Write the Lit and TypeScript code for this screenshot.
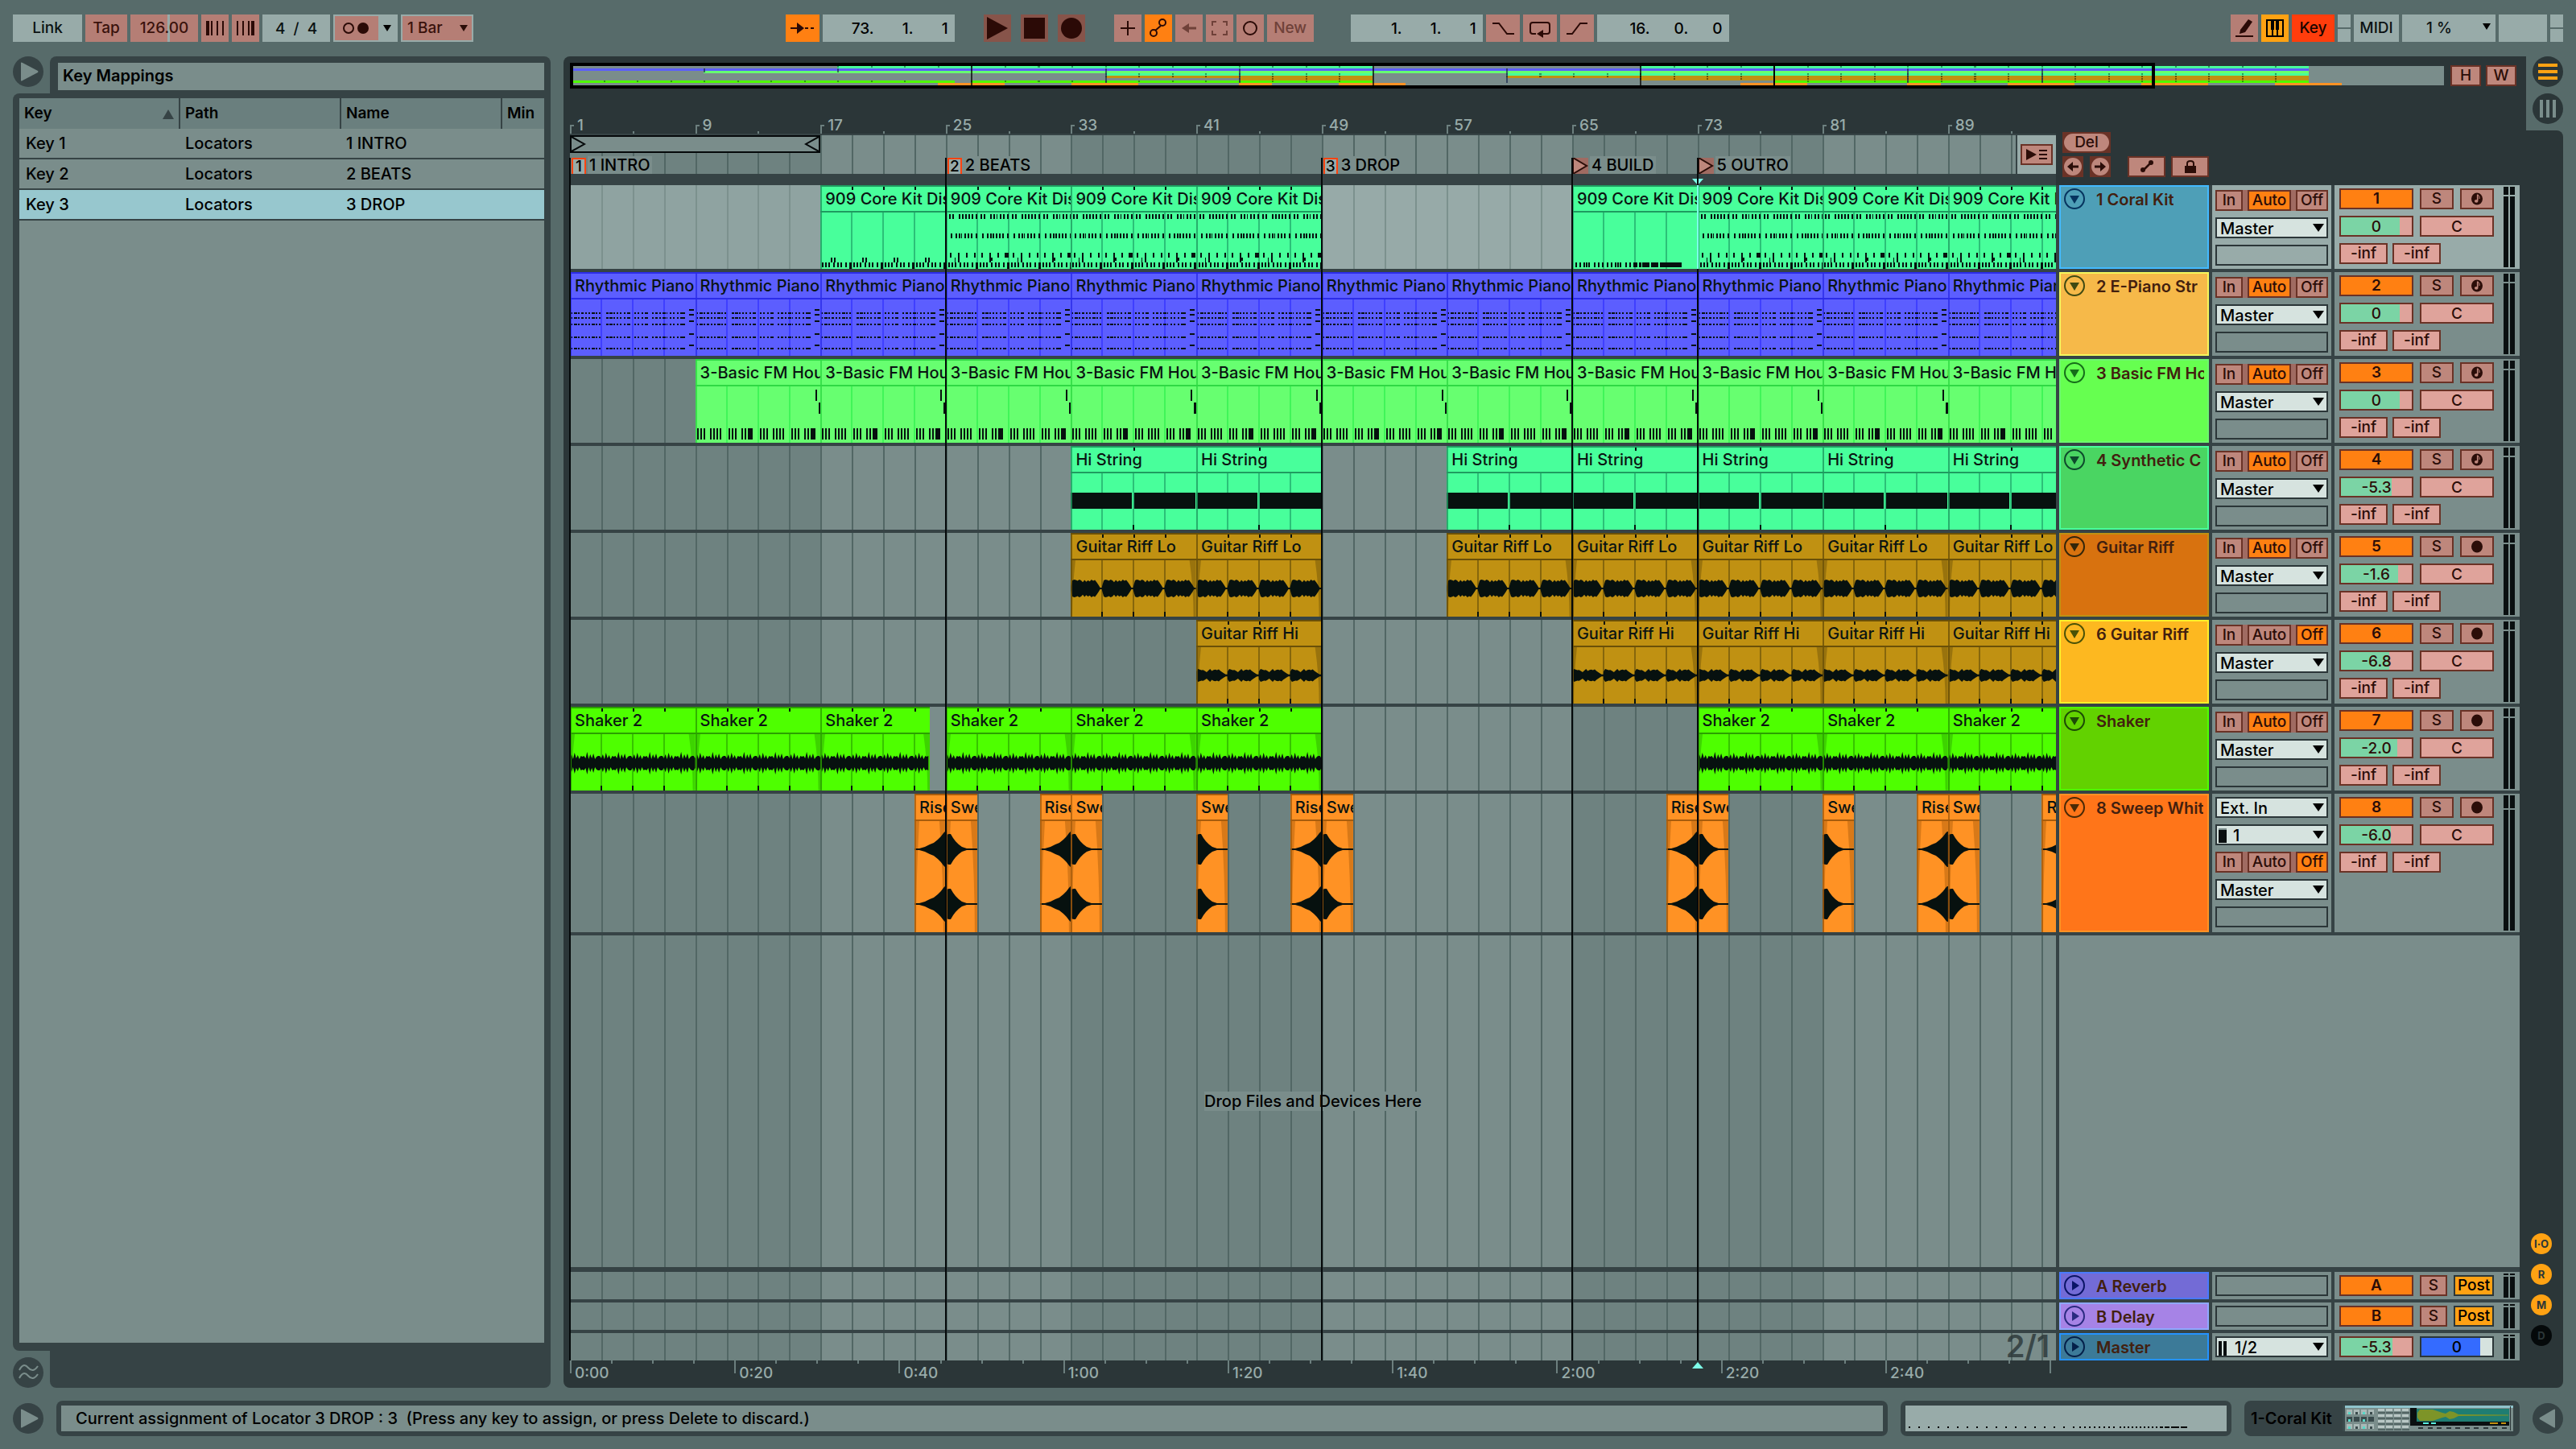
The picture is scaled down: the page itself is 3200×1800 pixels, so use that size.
import { LitElement, html, svg, css, nothing } from "lit";
import type { TemplateResult } from "lit";
import { customElement, property } from "lit/decorators.js";
import { classMap } from "lit/directives/class-map.js";
import { styleMap } from "lit/directives/style-map.js";

/* ---------- timeline geometry ---------- */
const VIEW_BARS = 94.9; // bars visible in the arrangement
const OVER_BARS = 112.1; // bars covered by the overview
const BAR = 19.5; // drawing units for one bar inside a clip
const SECONDS_PER_BAR = 1.9048;
const pct = (bar: number) => ((bar - 1) / VIEW_BARS) * 100;
const range = (n: number) => Array.from({ length: n }, (_, i) => i);

type Kind = "drums" | "chords" | "bass" | "pad" | "riffLo" | "riffHi" | "shaker" | "sweep";
interface Clip { at: number; bars: number; name: string; }
interface Track {
  kind: Kind; name: string; num: string; clip: string; edge: string; line: string;
  head: string; headEdge: string; ink: string; midi: boolean; monitor: number;
  vol: string; level: number; clips: Clip[]; peak?: number;
}

const rep = (name: string, starts: number[], bars = 8): Clip[] => starts.map((at) => ({ at, bars, name }));

const TRACKS: Track[] = [
  { kind: "drums", name: "1 Coral Kit", num: "1", clip: "#48ff9b", edge: "#1f9b60", line: "#2cc078", head: "#4e9fb7", headEdge: "#43baff", ink: "#06345f", midi: true, monitor: 1, vol: "0", level: 83,
    clips: rep("909 Core Kit Distort", [17, 25, 33, 41, 65, 73, 81, 89]) },
  { kind: "chords", name: "2 E-Piano Str", num: "2", clip: "#5c5eff", edge: "#2c2ce8", line: "#3f3fff", head: "#f6b949", headEdge: "#f4f65c", ink: "#3f4a12", midi: true, monitor: 1, vol: "0", level: 83,
    clips: rep("Rhythmic Piano", [1, 9, 17, 25, 33, 41, 49, 57, 65, 73, 81, 89]) },
  { kind: "bass", name: "3 Basic FM Ho", num: "3", clip: "#67ff70", edge: "#2fd944", line: "#40f558", head: "#66ff50", headEdge: "#6df76e", ink: "#156d1a", midi: true, monitor: 1, vol: "0", level: 83,
    clips: rep("3-Basic FM House", [9, 17, 25, 33, 41, 49, 57, 65, 73, 81, 89]) },
  { kind: "pad", name: "4 Synthetic C", num: "4", clip: "#48ff9b", edge: "#1f9b60", line: "#2cc078", head: "#4ad562", headEdge: "#48ff9b", ink: "#0d4a2c", midi: true, monitor: 1, vol: "-5.3", level: 72,
    clips: rep("Hi String", [33, 41, 57, 65, 73, 81, 89]) },
  { kind: "riffLo", name: "Guitar Riff", num: "5", clip: "#c09112", edge: "#6a5008", line: "#86660c", head: "#d8720f", headEdge: "#c09112", ink: "#33260a", midi: false, monitor: 1, vol: "-1.6", level: 81,
    clips: rep("Guitar Riff Lo", [33, 41, 57, 65, 73, 81, 89]) },
  { kind: "riffHi", name: "6 Guitar Riff", num: "6", clip: "#c09112", edge: "#6a5008", line: "#86660c", head: "#fdb820", headEdge: "#fff02a", ink: "#4a5206", midi: false, monitor: 2, vol: "-6.8", level: 68,
    clips: rep("Guitar Riff Hi", [41, 65, 73, 81, 89]) },
  { kind: "shaker", name: "Shaker", num: "7", clip: "#4eff00", edge: "#2ba000", line: "#36c400", head: "#62d200", headEdge: "#4eff00", ink: "#1c4a06", midi: false, monitor: 1, vol: "-2.0", level: 79,
    clips: [...rep("Shaker 2", [1, 9]), { at: 17, bars: 7, name: "Shaker 2" }, ...rep("Shaker 2", [25, 33, 41, 73, 81, 89])] },
  { kind: "sweep", name: "8 Sweep Whit", num: "8", clip: "#ff9224", edge: "#a85c0c", line: "#d67812", head: "#ff7519", headEdge: "#ff9224", ink: "#4a2a06", midi: false, monitor: 2, vol: "-6.0", level: 70, peak: 16,
    clips: [[23, 0], [25, 1], [31, 0], [33, 1], [41, 1], [47, 0], [49, 1], [71, 0], [73, 1], [81, 1], [87, 0], [89, 1], [95, 0]]
      .map(([at, s]) => ({ at, bars: 2, name: s ? "Sweep" : "Rise" })) },
];

const LOCATORS = [
  { at: 1, name: "1 INTRO", key: "1" },
  { at: 25, name: "2 BEATS", key: "2" },
  { at: 49, name: "3 DROP", key: "3" },
  { at: 65, name: "4 BUILD", key: "" },
  { at: 73, name: "5 OUTRO", key: "" },
];

/* ---------- clip contents ---------- */
const bars = (xs: number[], y: number, h: number, w = 2) =>
  xs.map((x) => `M${x} ${y}h${w}v${h}h${-w}z`).join("");

function drumNotes(at: number): string {
  const off = at % 16 === 9 ? 1 : 0;
  let d = "";
  for (const c of range(4)) {
    const x0 = c * 39 + off;
    const at0 = (xs: number[]) => xs.map((x) => x + x0);
    if (at === 65) {
      if (c < 2) d += bars(at0([4, 9, 14, 17, 20, 27, 32, 37]), 62, 6);
      continue;
    }
    if (at !== 17) {
      d += bars(at0([3, 7, 15, 19, 27, 31, 36]), 2, 6) + bars(at0([23]), 2, 6, c % 2 ? 1 : 2);
      d += bars(at0([5, 11, 15, 22, 26, 30, 36]), 26, 6) + bars(at0([18]), 26, 6, c % 2 ? 2 : 1);
      d += bars(at0([4, 14, 24]), 50, 6) + bars(at0(c % 2 ? [33] : [34]), 50, 6, c % 2 ? 5 : 2);
      d += bars(at0([14]), 56, 6) + (c % 2 ? bars(at0([16]), 56, 4) : bars(at0([10]), 56, 6, 1));
    } else d += bars(at0([13, 17]), 56, 6);
    d += bars(at0([2, 6, 10, 16, 21, 25, 31]), 62, 6) + bars(at0([36]), 62, 8, 3);
  }
  if (at === 65) d += bars([78, 83], 62, 6, 3) + bars([87, 98, 109, 118], 62, 6, 9) + bars([127], 62, 6, 9);
  return d;
}

function chordNotes(): string {
  let d = "";
  for (const y of [16, 22, 30, 46, 60]) {
    for (const x of range(33)) {
      if (x === 9 || x === 17 || x === 22) continue;
      const w = x % 5 === 1 ? 4 : x % 7 === 3 ? 3 : 2;
      d += `M${x * 4.4 + 1} ${y}h${w}v2h${-w}z`;
    }
  }
  for (const y of [12, 18, 26, 42, 56]) d += `M148 ${y}h6v2h-6z`;
  return d;
}

function bassNotes(): string {
  let d = "M149 4h2v14h-2zM153 20h3v14h-3z";
  for (const c of range(4)) {
    const x0 = c * 39;
    d += bars([2, 6, 10, 18, 22, 26, 30].map((x) => x + x0), 52, 14);
    if (c % 2) d += bars([x0 + 27], 52, 14, 4);
  }
  return d;
}

// Mirrors a list of half-heights around a centre line.
function envelope(points: [number, number][], cy: number): string {
  const top = points.map(([x, h]) => `${x.toFixed(1)} ${(cy - h).toFixed(1)}`);
  const bottom = [...points].reverse().map(([x, h]) => `${x.toFixed(1)} ${(cy + h).toFixed(1)}`);
  return `M${top.join("L")}L${bottom.join("L")}z`;
}

function riffWave(amp: number, cy: number): string {
  const lo = [0.2, 0.9, 1, 0.95, 0.85, 1, 0.9, 0.7, 0.95, 0.75, 0.9, 0.8, 1, 0.85, 0.95, 0.7, 0.4, 0.1, 0.1];
  const hi = [0.6, 1, 0.9, 0.8, 0.85, 0.7, 0.5, 0.75, 1, 0.7, 0.85, 0.9, 0.8, 0.95, 0.7, 0.5, 0.3, 0.15, 0.15];
  const shape = amp > 10 ? lo : hi;
  const pts: [number, number][] = [];
  for (const c of range(4)) shape.forEach((v, i) => pts.push([c * 39 + i * 2.16, v * amp]));
  return envelope(pts, cy);
}

function shakerWave(width: number): string {
  const pts: [number, number][] = [];
  // alternating valleys and peaks, one pass per two bars
  const seq = [6, 11, 5, 13, 6, 10, 5, 9, 8, 9, 6, 14, 5, 11, 6, 12, 5, 8, 9, 9];
  for (let x = 0, i = 0; x <= width; x += 1.95, i++) pts.push([x, seq[i % seq.length]]);
  return envelope(pts, 36);
}

function sweepWave(rise: boolean): string {
  const up: [number, number][] = [[0, 1], [6, 1], [13, 3], [19, 6], [24, 8], [29, 12], [33, 16], [36, 20], [38, 22], [39, 22]];
  const down: [number, number][] = [[0, 18], [4, 19], [6, 19], [9, 14], [12, 10], [16, 6], [20, 3], [26, 1], [39, 1]];
  return [35, 103].map((cy) => envelope(rise ? up : down, cy)).join("");
}

function clipBody(t: Track, c: Clip): TemplateResult {
  const w = c.bars * BAR;
  const h = t.kind === "sweep" ? 138 : 70;
  const step = 2 * BAR;
  const lines = range(Math.ceil(w / step)).slice(1).map((i) => `M${i * step - 1} 0h2v${h}h-2z`).join("");
  let d = "";
  if (t.kind === "drums") d = drumNotes(c.at);
  if (t.kind === "chords") d = chordNotes();
  if (t.kind === "bass") d = bassNotes();
  if (t.kind === "pad") d = "M0 24h76v20h-76zM79 24h76v20h-76z";
  if (t.kind === "riffLo") d = riffWave(11, 35);
  if (t.kind === "riffHi") d = riffWave(8, 35);
  if (t.kind === "shaker") d = shakerWave(w);
  if (t.kind === "sweep") d = sweepWave(c.name === "Rise");
  const ticks = t.kind === "pad" ? `M${w / 2 - 1} ${h - 6}h2v6h-2z`
    : t.kind === "riffLo" || t.kind === "riffHi" || t.kind === "shaker"
      ? range(Math.ceil(w / step)).slice(1).map((i) => `M${i * step - 1} ${h - 6}h2v6h-2z`).join("") : "";
  const fades = !t.midi
    ? svg`<path d="M0 0H6Q2 ${h / 2} 2 ${h}H0zM${w} 0H${w - 8}Q${w - 3} ${h / 2} ${w - 3} ${h}H${w}z" fill=${t.edge} opacity=".45"/>` : nothing;
  return html`<svg class="body" viewBox="0 0 ${w} ${h}" preserveAspectRatio="none" aria-hidden="true">
    ${fades}
    <path d=${lines} fill=${t.line} shape-rendering="crispEdges" />
    <path d=${d} fill="#07110f" shape-rendering=${t.midi ? "crispEdges" : "auto"} />
    <path d=${ticks} fill="#07110f" shape-rendering="crispEdges" />
  </svg>`;
}

/* ---------- shared look ---------- */
const base = css`
  :host { display: block; box-sizing: border-box; }
  *, *::before, *::after { box-sizing: border-box; }
  button, input, select {
    font: inherit; color: inherit; margin: 0; padding: 0; border: 0; border-radius: 0;
    background: none; appearance: none; outline: none; min-width: 0;
  }
  button { display: flex; align-items: center; justify-content: center; cursor: pointer; white-space: nowrap; }
  input { text-align: center; }
  svg { display: block; }
  .btn, .val {
    height: 26px; border: 2px solid #6a3226; background: #be877c; color: #2b0d08;
    display: flex; align-items: center; justify-content: center;
  }
  .val { background: #dfa39b; width: 100%; }
  .on { background: #ff8012; }
  .pick { position: relative; display: block; height: 26px; border: 2px solid #2b3638; background: #d6e3df; }
  .pick select { width: 100%; height: 100%; padding: 0 24px 0 4px; color: #000; display: block; font-size: 20px; }
  .pick::after {
    content: ""; position: absolute; right: 3px; top: 6px; pointer-events: none;
    border: 7px solid transparent; border-top: 10px solid #000; border-bottom: 0;
  }
`;

@customElement("timeline-lane")
export class TimelineLane extends LitElement {
  @property({ attribute: false }) track?: Track;
  @property({ type: Boolean, reflect: true }) selected = false;

  static styles = [base, css`
    :host { position: relative; overflow: hidden; background: #7a8d8b; min-width: 0; }
    .grid { position: absolute; inset: 0; width: 100%; height: 100%; }
    .wash { position: absolute; inset: 0; background: #d7e8e6; opacity: .32; }
    .clip { position: absolute; top: 0; bottom: 0; display: flex; flex-direction: column; overflow: hidden; }
    .name {
      flex: none; height: 34px; position: relative; padding: 0 0 0 6px; line-height: 30px; font-size: 20px;
      border-top: 2px solid; border-bottom: 2px solid; border-color: inherit; white-space: nowrap; overflow: hidden;
      color: #0a1412;
    }
    .tick { position: absolute; top: 0; width: 2px; height: 4px; background: #07110f; }
    .seam { position: absolute; left: 0; top: 0; bottom: 0; width: 2px; opacity: .8; }
    .body { flex: 1; width: 100%; min-height: 0; }
  `];

  render() {
    const t = this.track;
    return html`
      <svg class="grid" aria-hidden="true" shape-rendering="crispEdges">
        ${[1, 33, 65].map((b) => svg`<rect x="${pct(b)}%" width="${pct(17)}%" height="100%" fill="#6e8280"/>`)}
        ${range(47).map((i) => svg`<rect x="${pct(3 + i * 2)}%" width="2" height="100%" fill="#526765"/>`)}
      </svg>
      ${this.selected ? html`<div class="wash"></div>` : nothing}
      ${t?.clips.map((c) => {
        const step = t.kind === "pad" ? 4 : 2;
        const ticks = t.kind === "chords" || t.kind === "bass" || t.kind === "sweep" || c.at === 65 && t.kind === "drums"
          ? [] : range(Math.ceil(c.bars / step)).slice(1);
        return html`<div class="clip" style=${styleMap({ left: `${pct(c.at)}%`, width: `${(c.bars / VIEW_BARS) * 100}%`, background: t.clip, borderColor: t.edge })}>
          <div class="name">${c.name}${ticks.map((i) => html`<i class="tick" style=${styleMap({ left: `${(i * step * 100) / c.bars}%` })}></i>`)}</div>
          ${clipBody(t, c)}
          <div class="seam" style=${styleMap({ background: t.edge })}></div>
        </div>`;
      })}`;
  }
}

@customElement("level-meter")
export class LevelMeter extends LitElement {
  @property({ type: Number }) head = 10;
  static styles = [base, css`
    :host { display: flex; gap: 2px; }
    .ch { width: 6px; display: flex; flex-direction: column; gap: 2px; }
    .top, .bar { background: #0a0f10; }
    .top { flex: none; }
    .bar { flex: 1; }
  `];
  render() {
    return [0, 1].map(() => html`<div class="ch"><div class="top" style=${styleMap({ height: `${this.head}px` })}></div><div class="bar"></div></div>`);
  }
}

@customElement("track-head")
export class TrackHead extends LitElement {
  @property() name = "";
  @property() fill = "";
  @property() edge = "";
  @property() ink = "";
  @property({ type: Boolean }) folded = false;
  static styles = [base, css`
    .head { height: 100%; border: 2px solid; padding: 2px 4px; display: flex; gap: 14px; overflow: hidden; }
    .name { color: #42200f; font-size: 20px; font-weight: 600; line-height: 28px; white-space: nowrap; overflow: hidden; }
    .fold { width: 26px; height: 26px; flex: none; }
  `];
  render() {
    return html`<div class="head" style=${styleMap({ background: this.fill, borderColor: this.edge })}>
      <button class="fold" aria-label="Fold ${this.name}">
        <svg width="26" height="26" viewBox="0 0 26 26"><circle cx="13" cy="13" r="12" fill="none" stroke=${this.ink} stroke-width="2"/>
          <path d=${this.folded ? "M10 7L19 13L10 19z" : "M7 9H19L13 19z"} fill=${this.ink}/></svg>
      </button>
      <span class="name">${this.name}</span>
    </div>`;
  }
}

@customElement("track-io")
export class TrackIo extends LitElement {
  @property({ attribute: false }) track!: Track;
  static styles = [base, css`
    :host { padding: 6px 4px 0; display: flex; flex-direction: column; gap: 8px; }
    :host([audio-in]) { padding-top: 4px; }
    .monitor { display: flex; justify-content: space-between; background: #a06b62; height: 26px; }
    .in { width: 34px; } .auto { width: 54px; } .off { width: 40px; }
    .slot { height: 26px; border: 2px solid #2b3638; }
    .chan { position: relative; }
    .chan select { padding-left: 20px; }
    .chan::before { content: ""; position: absolute; left: 2px; top: 3px; width: 10px; height: 18px; background: #0a0f10; border-top: 2px solid #7a8d8b; }
  `];
  render() {
    const t = this.track;
    const names = ["In", "Auto", "Off"];
    return html`
      ${t.kind === "sweep" ? html`
        <label class="pick"><select aria-label="Input type"><option>Ext. In</option></select></label>
        <label class="pick chan"><select aria-label="Input channel"><option>1</option></select></label>` : nothing}
      <div class="monitor">${names.map((n, i) => html`<button class=${classMap({ btn: true, [n.toLowerCase()]: true, on: i === t.monitor })}>${n}</button>`)}</div>
      <label class="pick"><select aria-label="Output"><option>Master</option></select></label>
      <div class="slot"></div>`;
  }
}

@customElement("track-mixer")
export class TrackMixer extends LitElement {
  @property({ attribute: false }) track!: Track;
  static styles = [base, css`
    :host { display: flex; justify-content: space-between; padding: 2px 6px; }
    .strip { padding-top: 2px; display: flex; flex-direction: column; gap: 8px; }
    .row { display: flex; gap: 8px; }
    .row.tight { gap: 6px; }
    .num { width: 92px; font-weight: 600; }
    .half { width: 42px; }
    .wide { width: 92px; }
    .send { width: 60px; background: #dfa39b; }
  `];
  render() {
    const t = this.track;
    const fill = `linear-gradient(90deg, #7bd4a5 ${t.level}%, #dfa39b ${t.level}%)`;
    return html`<div class="strip">
        <div class="row"><button class="btn on num">${t.num}</button><button class="btn half">S</button>
          <button class="btn half" aria-label="Arm">
            <svg width="14" height="16" viewBox="0 0 14 16"><ellipse cx="7" cy="8" rx="7" ry="7.5" fill="#2b0d08"/>
            ${t.midi ? svg`<path d="M7.7 2.5V10" stroke="#be877c" stroke-width="1.6"/><ellipse cx="6.2" cy="10.8" rx="2.3" ry="1.9" fill="#be877c"/><path d="M8 3Q11 5 10 8" stroke="#be877c" stroke-width="1" fill="none"/>` : nothing}</svg></button></div>
        <div class="row"><input class="val wide" aria-label="Volume" .value=${t.vol} style=${styleMap({ background: fill })}><input class="val wide" aria-label="Pan" value="C"></div>
        <div class="row tight"><button class="btn send">-inf</button><button class="btn send">-inf</button></div>
      </div>
      <level-meter .head=${t.peak ?? 10}></level-meter>`;
  }
}

@customElement("song-overview")
export class SongOverview extends LitElement {
  static styles = [base, css`
    :host { position: relative; height: 32px; padding: 4px 0; }
    .map { width: 100%; height: 24px; background: #7a8d8b; }
    .frame { position: absolute; left: 0; top: 0; bottom: 0; width: 84.6%; border: 4px solid #000; }
  `];
  render() {
    const rows: [number, number][][] = [
      [[17, 49], [65, 105]], [[1, 105]], [[9, 105]], [[33, 49], [57, 105]], [[33, 49], [57, 105]],
      [[41, 49], [65, 105]], [[1, 24], [25, 49], [73, 105]],
      [[23, 27], [31, 35], [41, 43], [47, 51], [71, 75], [81, 83], [87, 91], [95, 99], [103, 107]],
    ];
    const X = (b: number) => (b - 1) * 10;
    return html`<svg class="map" viewBox="0 0 ${OVER_BARS * 10} 24" preserveAspectRatio="none" shape-rendering="crispEdges" role="img" aria-label="Song overview">
        ${rows.map((r, i) => r.map(([a, b]) => svg`<rect x=${X(a)} y=${i * 3} width=${(b - a) * 10} height="3" fill=${TRACKS[i].clip}/>`))}
        ${rows.map((r, i) => i === 1 || i === 2 || i === 7 ? nothing : r.map(([a, b]) => range(Math.floor((b - a) / 2)).map((k) => svg`<rect x=${X(a + k * 2)} y=${i * 3} width="1" height="2" fill=${TRACKS[i].edge}/>`)))}
        ${[9, 17, 33, 41, 57, 81, 89].map((b) => svg`<rect x=${X(b)} y="3" width="1" height=${b > 30 ? 18 : 5} fill="#1c2b50" opacity=".7"/>`)}
        ${[25, 49, 65, 73].map((b) => svg`<rect x=${X(b)} width="1" height="24" fill="#000" opacity=${b === 73 ? 1 : 0.7}/>`)}
      </svg><div class="frame"></div>`;
  }
}

@customElement("app-root")
export class AppRoot extends LitElement {
  static styles = [base, css`
    :host {
      font-family: Inter, "Noto Sans", sans-serif; font-size: 19px; font-weight: 500; line-height: 24px; color: #000;
      background: #576b6a; min-height: 100vh; display: flex; flex-direction: column;
    }
    /* control bar */
    .bar { display: flex; padding: 18px 16px; color: #0b1212; }
    .group { display: flex; gap: 4px; height: 34px; }
    .group > * { height: 34px; flex: none; }
    .grow-a { flex: 388 1 0; } .grow-b { flex: 624 1 0; } .gap { width: 36px; } .gap-l { width: 46px; }
    .lt { background: #98aba9; }
    .pk { background: #b57e75; color: #3a120c; }
    .or { background: #ff8012; }
    .am { background: #ffa213; }
    .dk { background: #87544a; }
    .w34 { width: 34px; } .w42 { width: 42px; } .w84 { width: 84px; } .w164 { width: 164px; }
    .link { width: 86px; } .tap { width: 52px; } .new { width: 58px; color: #6f4139; }
    .time { text-align: right; padding-right: 8px; white-space: pre; color: #000; }
    .tempo { width: 84px; display: flex; position: relative; }
    .tempo input { width: 100%; }
    .tempo::after { content: ""; position: absolute; left: 46px; top: 0; width: 3px; height: 100%; background: #98aba9; z-index: 0; }
    .tempo input { position: relative; z-index: 1; }
    .metro { width: 80px; display: flex; border: 2px solid #98aba9; background: #98aba9; }
    .metro button { width: 54px; }
    .caret { flex: 1; display: flex; align-items: center; justify-content: center; }
    .quant { width: 90px; border: 2px solid #98aba9; position: relative; }
    .quant select { width: 100%; height: 100%; padding-left: 6px; display: block; }
    .quant::after, .cpu::after { content: ""; position: absolute; right: 5px; top: 11px; border: 5px solid transparent; border-top: 8px solid #2b0d08; border-bottom: 0; pointer-events: none; }
    .transport { gap: 12px; }
    .key { width: 53px; background: #ff3d0c; color: #1a0500; }
    .midi { width: 56px; }
    .cpu { width: 116px; position: relative; }
    .cpu select { width: 100%; height: 100%; padding-left: 30px; display: block; }
    .cpu::after { right: 6px; border-top-color: #000; }
    .w60 { width: 60px; }
    .leds { width: 16px; display: flex; flex-direction: column; gap: 2px; }
    .leds i { flex: 1; background: #98aba9; }

    /* middle */
    .mid { flex: 1; display: flex; padding: 0 16px; gap: 16px; }
    .browser { width: 668px; flex: none; display: grid; grid-template: 46px 1fr 46px / 46px 1fr; }
    .round { width: 38px; height: 38px; flex: none; border-radius: 50%; background: #364345; }
    .tab { background: #364345; border-radius: 8px 8px 0 0; padding: 8px 8px 4px 10px; }
    .title { background: #7a8d8b; height: 34px; margin: 0; padding-left: 6px; font-size: 20px; font-weight: 600; line-height: 32px; color: #000; }
    .listing { grid-column: 1 / 3; background: #364345; border-radius: 8px 0 0 8px; padding: 6px 8px 10px; display: flex; flex-direction: column; }
    .foot { align-self: end; }
    .tray { background: #364345; border-radius: 0 0 8px 8px; }
    table { border-collapse: separate; border-spacing: 0; table-layout: fixed; width: 100%; font-size: 20px; }
    th, td { text-align: left; padding: 0 0 0 6px; white-space: nowrap; }
    th { background: #6a7f7e; height: 38px; font-weight: 600; border-left: 2px solid #364345; font-size: 19px; }
    th:first-child { border-left: 0; }
    .sort { float: right; margin: 7px 6px 0 0; border: 7px solid transparent; border-bottom: 12px solid #364345; border-top: 0; }
    td { background: #7a8d8b; height: 38px; border-bottom: 2px solid #364345; padding-left: 8px; line-height: 34px; }
    tr.cur td { background: #97c7ce; }
    .c1 { width: 198px; } .c2 { width: 200px; } .c4 { width: 54px; }
    .void { flex: 1; background: #7a8d8b; }

    .arr { flex: 1; min-width: 0; display: flex; }
    .main { flex: 1; min-width: 0; background: #2b3638; border-radius: 8px 0 0 8px; padding: 8px 8px 0; display: flex; flex-direction: column; }
    .side { width: 46px; flex: none; display: flex; flex-direction: column; }
    .modes { height: 92px; padding-left: 8px; display: flex; flex-direction: column; gap: 8px; }
    .modes .round { background: #2b3638; }
    .shows { flex: 1; background: #2b3638; border-radius: 0 8px 8px 0; padding: 0 0 52px 6px; display: flex; flex-direction: column; justify-content: flex-end; gap: 12px; }
    .dot { width: 26px; height: 26px; border-radius: 50%; background: #ffa213; color: #2b3638; font-size: 13px; font-weight: 700; line-height: 26px; }
    .dot.dim { background: #05090a; }

    .over { display: flex; align-items: center; }
    song-overview { flex: 1; }
    .hw { width: 38px; }
    .hw.first { margin: 0 6px 0 8px; } .hw.last { margin-right: 4px; }

    .top { display: flex; height: 120px; }
    .rulers { flex: 1; min-width: 0; display: flex; flex-direction: column; }
    .beats { position: relative; height: 58px; border-bottom: 2px solid #364345; color: #98aba9; }
    .mark { position: absolute; bottom: 0; height: 11px; border-left: 2px solid #6c7f7e; }
    .mark::before { content: ""; position: absolute; left: 0; top: 0; width: 3px; height: 2px; background: #6c7f7e; }
    .mark.minor { height: 3px; }
    .mark.minor::before { display: none; }
    .mark span { position: absolute; left: 7px; bottom: -2px; }
    .scrub { position: relative; height: 48px; }
    .scrub timeline-lane { height: 48px; }
    .loop { position: absolute; left: 0; top: 0; height: 22px; border: 2px solid #05090a; background: #7a8d8b; display: flex; justify-content: space-between; }
    .loc { position: absolute; top: 26px; height: 22px; display: flex; align-items: flex-end; gap: 2px; font-size: 20px; }
    .loc .kb { width: 18px; height: 20px; margin-left: 2px; border: 2px solid #ff4310; border-bottom: 0; background: #98aba9; line-height: 18px; font-size: 19px; }
    .loc .nm { background: #7a8d8b; height: 22px; line-height: 22px; padding: 0 2px; white-space: nowrap; }
    .resume { position: absolute; right: 0; top: 0; width: 50px; height: 48px; background: #98aba9; border-left: 2px solid #364345; display: flex; align-items: center; justify-content: center; }
    .resume .btn { width: 40px; }
    .strip { position: relative; height: 14px; background: #364345; }
    .head-mark { position: absolute; width: 14px; height: 8px; transform: translateX(-50%); }
    .strip .head-mark { bottom: 0; }
    .tools { width: 576px; flex: none; padding: 0 0 10px 8px; display: flex; flex-direction: column; justify-content: flex-end; gap: 4px; }
    .tools .line { display: flex; }
    .pill { width: 60px; height: 26px; background: #6a3226; }
    .pill span { background: #be877c; border-radius: 12px; width: 56px; height: 22px; line-height: 22px; color: #2b0d08; }
    .nav { width: 26px; height: 26px; background: #6a3226; margin-right: 8px; }
    .tool { width: 47px; } .tool.a { margin: 0 7px 0 13px; }

    .tracks { position: relative; flex: 1; display: flex; flex-direction: column; gap: 4px; background: #364345; }
    .trk { display: grid; grid-template-columns: minmax(0, 1fr) 186px 148px 230px; grid-template-rows: minmax(0, 1fr); column-gap: 4px; height: 104px; flex: none; }
    .trk.tall { height: 172px; }
    .trk.ret { height: 34px; }
    .trk.rest { flex: 1; height: auto; min-height: 200px; margin-bottom: 2px; grid-template-columns: minmax(0, 1fr) 572px; }
    .cell { background: #7a8d8b; }
    .sel .cell { background: #98aba9; }
    .drop { position: relative; display: flex; }
    .drop timeline-lane { flex: 1; }
    .hint { position: absolute; inset: 0; margin: 0; display: flex; align-items: center; justify-content: center; font-size: 20px; }
    .hint span { background: #7a8d8b; }
    .slotbox { padding: 4px; }
    .slot { height: 26px; border: 2px solid #2b3638; }
    .retmix { display: flex; justify-content: space-between; padding: 2px 6px; }
    .retmix .row { display: flex; gap: 8px; padding-top: 2px; }
    .w92 { width: 92px; }
    .ltr { width: 92px; font-weight: 600; } .solo { width: 34px; }
    .post { width: 50px; background: #ffa213; border-color: #2b3638; color: #000; }
    .cue { border-color: #2b3638; color: #000; background: linear-gradient(90deg, #346bff 83%, #d6e3df 83%); }
    .mvol { background: linear-gradient(90deg, #7bd4a5 73%, #dfa39b 73%); }
    .stereo { position: relative; }
    .stereo select { padding-left: 22px; }
    .stereo::before { content: ""; position: absolute; left: 2px; top: 4px; width: 10px; height: 18px; border: solid #0a0f10; border-width: 0 4px; }
    .lines { position: absolute; left: 0; right: 576px; top: -34px; bottom: 0; pointer-events: none; }
    .lines i { position: absolute; top: 0; bottom: 0; width: 2px; margin-left: -1px; background: #05090a; }
    .lines .cyan { top: 34px; bottom: auto; height: 104px; background: #7dffe9; }
    .zoomtxt { position: absolute; right: 8px; bottom: 0; font-size: 38px; line-height: 36px; font-weight: 600; color: #2b3638; opacity: .8; }

    .secs { position: relative; height: 34px; margin-right: 576px; color: #98aba9; }
    .sec { position: absolute; top: 0; height: 16px; border-left: 2px solid #6c7f7e; }
    .sec.minor { height: 4px; }
    .sec span { position: absolute; left: 4px; top: 4px; }
    .secs .head-mark { top: 2px; }

    /* status bar */
    .status { display: flex; padding: 16px; height: 76px; gap: 16px; align-items: center; }
    .box { height: 44px; background: #364345; border-radius: 8px; padding: 6px; min-width: 0; }
    .msg { flex: 1; }
    .msg div { background: #7a8d8b; height: 32px; line-height: 32px; padding-left: 18px; white-space: pre; overflow: hidden; font-size: 20px; }
    .mini { width: 411px; }
    .mini svg { background: #98aba9; }
    .dev { width: 342px; display: flex; justify-content: space-between; padding: 6px 8px; line-height: 32px; font-weight: 600; font-size: 20px; }
    .dev span { flex: 1; white-space: nowrap; }
  `];

  private play = (flip = false) => html`<svg width="38" height="38" viewBox="0 0 38 38"><path d=${flip ? "M28 8V30Q28 31 26 30L9 20Q8 19 9 18L26 8Q28 7 28 8z" : "M10 8V30Q10 31 12 30L31 20Q32 19 31 18L12 8Q10 7 10 8z"} fill="#7a8d8b"/></svg>`;

  private bar() {
    const ink = "#2b0a06";
    const icon = (d: TemplateResult | TemplateResult[] | any, w = 34) => html`<svg width=${w} height="34" viewBox="0 0 ${w} 34" fill="none" stroke=${ink} stroke-width="2">${d}</svg>`;
    return html`<header class="bar">
      <div class="group">
        <button class="lt link">Link</button><button class="pk tap">Tap</button>
        <div class="tempo pk"><input aria-label="Tempo" value="126.00"></div>
        <button class="pk w34" aria-label="Nudge down">${icon(svg`<path d="M8 8V26M13 8V26M20 8V26M27 8V26" shape-rendering="crispEdges"/><path d="M8 8V26" stroke-width="4"/>`)}</button>
        <button class="pk w34" aria-label="Nudge up">${icon(svg`<path d="M7 8V26M14 8V26M21 8V26" shape-rendering="crispEdges"/><path d="M26 8V26" stroke-width="4"/>`)}</button>
        <input class="lt w84" aria-label="Time signature" value="4  /  4">
        <div class="metro"><button class="pk" aria-label="Metronome"><svg width="54" height="30" viewBox="0 0 54 30"><circle cx="17" cy="15" r="6" fill="none" stroke=${ink} stroke-width="2"/><circle cx="35" cy="15" r="7" fill=${ink}/></svg></button>
          <span class="caret"><svg width="10" height="8"><path d="M0 0H10L5 8z"/></svg></span></div>
        <label class="quant pk"><select aria-label="Quantization"><option>1 Bar</option></select></label>
      </div>
      <div class="grow-a"></div>
      <div class="group">
        <button class="or w42" aria-label="Follow">${icon(svg`<path d="M6 17H14M24 17H28M31 17H35"/><path d="M14 10L23 17L14 24z" fill=${ink} stroke="none"/>`, 42)}</button>
        <input class="lt w164 time" aria-label="Position" value="73.       1.       1">
      </div>
      <div class="gap"></div>
      <div class="group transport">
        <button class="dk w34" aria-label="Play">${icon(svg`<path d="M4 3L30 17L4 31z" fill=${ink} stroke="none"/>`)}</button>
        <button class="dk w34" aria-label="Stop">${icon(svg`<path d="M4 4H30V30H4z" fill=${ink} stroke="none"/>`)}</button>
        <button class="dk w34" aria-label="Record">${icon(svg`<circle cx="17" cy="17" r="13" fill=${ink} stroke="none"/>`)}</button>
      </div>
      <div class="gap"></div>
      <div class="group">
        <button class="pk w34" aria-label="Overdub">${icon(svg`<path d="M17 8V26M8 17H26"/>`)}</button>
        <button class="or w34" aria-label="Automation arm">${icon(svg`<circle cx="11" cy="23" r="4"/><circle cx="22" cy="10" r="4"/><path d="M13 20L20 14"/>`)}</button>
        <button class="pk w34" aria-label="Re-enable automation"><svg width="34" height="34" viewBox="0 0 34 34"><path d="M8 17L17 11V23z" fill="#6f4139"/><path d="M16 17H26" stroke="#6f4139" stroke-width="3"/></svg></button>
        <button class="pk w34" aria-label="Capture"><svg width="34" height="34" viewBox="0 0 34 34"><path d="M8 14V9H13M21 9H26V14M26 20V25H21M13 25H8V20" stroke="#6f4139" stroke-width="2" fill="none"/></svg></button>
        <button class="pk w34" aria-label="Session record">${icon(svg`<circle cx="17" cy="17" r="8"/>`)}</button>
        <button class="pk new">New</button>
      </div>
      <div class="gap-l"></div>
      <div class="group">
        <input class="lt w164 time" aria-label="Loop start" value="1.       1.       1">
        <button class="pk w42" aria-label="Punch in">${icon(svg`<path d="M8 11H16L26 24H35"/>`, 42)}</button>
        <button class="pk w42" aria-label="Loop">${icon(svg`<path d="M16 24H12Q9 24 9 21V13Q9 10 12 10H30Q33 10 33 13V21Q33 24 30 24H24"/><path d="M17 24L25 19V29z" fill=${ink} stroke="none"/>`, 42)}</button>
        <button class="pk w42" aria-label="Punch out">${icon(svg`<path d="M8 24H15L25 11H34"/>`, 42)}</button>
        <input class="lt w164 time" aria-label="Loop length" value="16.      0.      0">
      </div>
      <div class="grow-b"></div>
      <div class="group">
        <button class="pk w34" aria-label="Draw mode">${icon(svg`<path d="M6 27H28"/><path d="M22 6L27 9L18 22L11 24L12 19z" fill=${ink} stroke="none"/>`)}</button>
        <button class="am w34" aria-label="Computer keyboard"><svg width="34" height="34" viewBox="0 0 34 34" fill="none" stroke="#000" stroke-width="2"><path d="M7 7H27V27H7zM14 7V27M20 7V27"/><path d="M14 7V19M20 7V19" stroke-width="4"/></svg></button>
        <button class="key">Key</button>
        <span class="leds"><i></i><i></i></span>
        <button class="lt midi">MIDI</button>
        <label class="lt cpu"><select aria-label="CPU load"><option>1 %</option></select></label>
        <span class="lt w60"></span>
        <span class="leds"><i></i><i></i></span>
      </div>
    </header>`;
  }

  private browser() {
    const rows = [["Key 1", "1 INTRO"], ["Key 2", "2 BEATS"], ["Key 3", "3 DROP"]];
    return html`<aside class="browser">
      <button class="round" aria-label="Hide browser">${this.play()}</button>
      <div class="tab"><h2 class="title">Key Mappings</h2></div>
      <div class="listing">
        <table>
          <colgroup><col class="c1"><col class="c2"><col><col class="c4"></colgroup>
          <thead><tr><th>Key<i class="sort"></i></th><th>Path</th><th>Name</th><th>Min</th></tr></thead>
          <tbody>${rows.map(([k, n], i) => html`<tr class=${classMap({ cur: i === 2 })}><td>${k}</td><td>Locators</td><td>${n}</td><td></td></tr>`)}</tbody>
        </table>
        <div class="void"></div>
      </div>
      <button class="round foot" aria-label="Groove pool"><svg width="38" height="38" viewBox="0 0 38 38" fill="none" stroke="#7a8d8b" stroke-width="2"><path d="M8 16Q13 6 19 13T31 11M8 26Q13 16 19 23T31 21"/></svg></button>
      <div class="tray"></div>
    </aside>`;
  }

  private head() {
    return html`<div class="top">
      <div class="rulers">
        <div class="beats">
          ${range(24).map((i) => {
            const b = 1 + i * 4;
            return html`<div class=${classMap({ mark: true, minor: i % 2 === 1 })} style=${styleMap({ left: `${pct(b)}%` })}>${i % 2 ? nothing : html`<span>${b}</span>`}</div>`;
          })}
        </div>
        <div class="scrub">
          <timeline-lane></timeline-lane>
          <div class="loop" style=${styleMap({ width: `${pct(17)}%` })}>
            <svg width="18" height="18" fill="none" stroke="#05090a" stroke-width="2"><path d="M0 0L16 9L0 18"/></svg>
            <svg width="18" height="18" fill="none" stroke="#05090a" stroke-width="2"><path d="M18 0L2 9L18 18"/></svg>
          </div>
          ${LOCATORS.map((l) => html`<div class="loc" style=${styleMap({ left: `${pct(l.at)}%` })}>
            ${l.key ? html`<button class="kb">${l.key}</button>` : html`<svg width="20" height="20" viewBox="0 0 20 20"><path d="M1 0H20V20H1z" fill="#a06b62"/><path d="M1 0L18 10L1 20z" fill="#be877c" stroke="#2b0d08" stroke-width="2"/></svg>`}
            <span class="nm">${l.name}</span></div>`)}
          <div class="resume"><button class="btn" aria-label="Set locator"><svg width="28" height="18" viewBox="0 0 28 18" fill="#2b0d08"><path d="M1 2L14 9L1 16z"/><path d="M17 3H27V5H17zM17 8H27V10H17zM17 13H27V15H17z"/></svg></button></div>
        </div>
        <div class="strip"><svg class="head-mark" style=${styleMap({ left: `${pct(73)}%` })} viewBox="0 0 14 8"><path d="M0 0H14L7 8z" fill="#7dffe9"/></svg></div>
      </div>
      <div class="tools">
        <div class="line"><button class="pill"><span>Del</span></button></div>
        <div class="line">
          <button class="nav" aria-label="Previous locator"><svg width="26" height="26" viewBox="0 0 26 26"><circle cx="13" cy="13" r="11" fill="#be877c"/><path d="M6 13L13 7V19z" fill="#2b0d08"/><path d="M12 13H20" stroke="#2b0d08" stroke-width="3"/></svg></button>
          <button class="nav" aria-label="Next locator"><svg width="26" height="26" viewBox="0 0 26 26"><circle cx="13" cy="13" r="11" fill="#be877c"/><path d="M20 13L13 7V19z" fill="#2b0d08"/><path d="M6 13H14" stroke="#2b0d08" stroke-width="3"/></svg></button>
          <button class="btn tool a" aria-label="Automation mode"><svg width="20" height="18" viewBox="0 0 20 18"><path d="M5 14L15 4" stroke="#2b0d08" stroke-width="2.5"/><circle cx="5" cy="13" r="3" fill="#2b0d08"/><circle cx="15" cy="4" r="3" fill="#2b0d08"/></svg></button>
          <button class="btn tool" aria-label="Lock envelopes"><svg width="16" height="18" viewBox="0 0 16 18"><path d="M1 8H15V17H1z" fill="#2b0d08"/><path d="M4 9V5Q4 2 8 2T12 5V9" fill="none" stroke="#2b0d08" stroke-width="2"/></svg></button>
        </div>
      </div>
    </div>`;
  }

  private returns() {
    const items = [
      { name: "A Reverb", key: "A", fill: "#736bd6", edge: "#4a7aff", ink: "#0a1466" },
      { name: "B Delay", key: "B", fill: "#a683e6", edge: "#8fa8ff", ink: "#2a2a80" },
    ];
    return html`${items.map((r) => html`<div class="trk ret">
        <timeline-lane></timeline-lane>
        <track-head name=${r.name} fill=${r.fill} edge=${r.edge} ink=${r.ink} folded></track-head>
        <div class="cell slotbox"><div class="slot"></div></div>
        <div class="cell retmix"><div class="row"><button class="btn on ltr">${r.key}</button><button class="btn solo">S</button><button class="btn post">Post</button></div><level-meter .head=${2}></level-meter></div>
      </div>`)}
      <div class="trk ret">
        <timeline-lane></timeline-lane>
        <track-head name="Master" fill="#3c7a98" edge="#2492ff" ink="#04204a" folded></track-head>
        <div class="cell slotbox"><label class="pick stereo"><select aria-label="Master output"><option>1/2</option></select></label></div>
        <div class="cell retmix"><div class="row"><input class="val w92 mvol" aria-label="Master volume" value="-5.3"><input class="val w92 cue" aria-label="Cue volume" value="0"></div><level-meter .head=${2}></level-meter></div>
      </div>`;
  }

  private arrangement() {
    const total = VIEW_BARS * SECONDS_PER_BAR;
    return html`<main class="arr">
      <div class="main">
        <div class="over"><song-overview></song-overview><button class="btn hw first">H</button><button class="btn hw last">W</button></div>
        ${this.head()}
        <div class="tracks">
          ${TRACKS.map((t, i) => html`<div class=${classMap({ trk: true, tall: i === 7, sel: i === 0 })}>
            <timeline-lane .track=${t} ?selected=${i === 0}></timeline-lane>
            <track-head name=${t.name} fill=${t.head} edge=${t.headEdge} ink=${t.ink}></track-head>
            <track-io class="cell" .track=${t} ?audio-in=${i === 7}></track-io>
            <track-mixer class="cell" .track=${t}></track-mixer>
          </div>`)}
          <div class="trk rest"><div class="drop"><timeline-lane></timeline-lane><p class="hint"><span>Drop Files and Devices Here</span></p></div><div class="cell"></div></div>
          ${this.returns()}
          <div class="lines">${LOCATORS.map((l) => html`<i style=${styleMap({ left: `${pct(l.at)}%` })}></i>`)}<i class="cyan" style=${styleMap({ left: `${pct(73)}%` })}></i><span class="zoomtxt">2/1</span></div>
        </div>
        <div class="secs">
          ${range(Math.floor(total / 5) + 1).map((i) => {
            const s = i * 5;
            const major = i % 4 === 0;
            return html`<div class=${classMap({ sec: true, minor: !major })} style=${styleMap({ left: `${(s / total) * 100}%` })}>${major && s < 180 ? html`<span>${Math.floor(s / 60)}:${String(s % 60).padStart(2, "0")}</span>` : nothing}</div>`;
          })}
          <svg class="head-mark" style=${styleMap({ left: `${pct(73)}%` })} viewBox="0 0 14 8"><path d="M0 8H14L7 0z" fill="#7dffe9"/></svg>
        </div>
      </div>
      <div class="side">
        <div class="modes">
          <button class="round" aria-label="Arrangement view"><svg width="24" height="20"><path d="M0 0H24V4H0zM0 8H24V12H0zM0 16H24V20H0z" fill="#ffa213"/></svg></button>
          <button class="round" aria-label="Session view"><svg width="20" height="22"><path d="M0 0H4V22H0zM8 0H12V22H8zM16 0H20V22H16z" fill="#7a8d8b"/></svg></button>
        </div>
        <div class="shows"><button class="dot">I·O</button><button class="dot">R</button><button class="dot">M</button><button class="dot dim">D</button></div>
      </div>
    </main>`;
  }

  private status() {
    const dots = [...range(18).map((i) => 4 + i * 12), ...range(8).map((i) => 216 + i * 6), ...range(10).map((i) => 266 + i * 5)];
    return html`<footer class="status">
      <button class="round" aria-label="Show info">${this.play()}</button>
      <div class="box msg"><div>Current assignment of Locator 3 DROP : 3  (Press any key to assign, or press Delete to discard.)</div></div>
      <div class="box mini"><svg width="399" height="32" shape-rendering="crispEdges" aria-hidden="true">${dots.map((x) => svg`<rect x=${x} y="26" width="2" height="2"/>`)}<path d="M316 26h4v2h-4zM322 26h6v2h-6zM330 26h10v2h-10zM342 26h8v2h-8z"/></svg></div>
      <div class="box dev"><span>1-Coral Kit</span>
        <svg width="212" height="32" viewBox="0 0 212 32" shape-rendering="crispEdges" aria-hidden="true">
          <rect width="212" height="32" fill="#7a8d8b"/><rect width="212" height="3" fill="#8fc3cc"/><rect width="3" height="32" fill="#3a4a4c"/>
          ${range(4).map((c) => range(3).map((r) => svg`<rect x=${5 + c * 9} y=${5 + r * 9} width="7" height="6" fill=${r === 1 ? "#394a4c" : "#aab9b7"}/><rect x=${7 + c * 9} y=${8 + r * 9} width="3" height="3" fill=${c % 2 ? "#3a4a4c" : "#58d8c8"}/>`))}
          ${range(4).map((c) => range(4).map((r) => svg`<rect x=${44 + c * 10} y=${4 + r * 7} width="8" height="3" fill="#b9c7c5"/><rect x=${44 + c * 10} y=${8 + r * 7} width="9" height="2" fill="#536564"/>`))}
          <rect x="84" y="3" width="8" height="22" fill="#0a0f10"/><rect x="92" y="4" width="115" height="16" fill="#1f7d72"/><rect x="92" y="20" width="115" height="5" fill="#0a0f10"/>
          <path d=${envelope([[93, 3], [96, 7], [112, 7], [124, 3], [128, 2], [133, 5], [138, 4], [144, 1], [206, .5]], 12)} fill="#7d9428" shape-rendering="auto"/>
          <path d="M100 21h7v2h-7zM110 21h6v2h-6z" fill="#58f0e0"/><path d="M183 21h10v2h-10zM197 21h6v2h-6z" fill="#c09112"/>
          ${range(10).map((c) => svg`<rect x=${94 + c * 11.5} y="27" width="6" height="2" fill="#2b3638"/>`)}
          <rect x="208" y="1" width="1" height="30" fill="#2b3638"/>
        </svg></div>
      <button class="round" aria-label="Hide device view">${this.play(true)}</button>
    </footer>`;
  }

  render() {
    return html`${this.bar()}<div class="mid">${this.browser()}${this.arrangement()}</div>${this.status()}`;
  }
}
